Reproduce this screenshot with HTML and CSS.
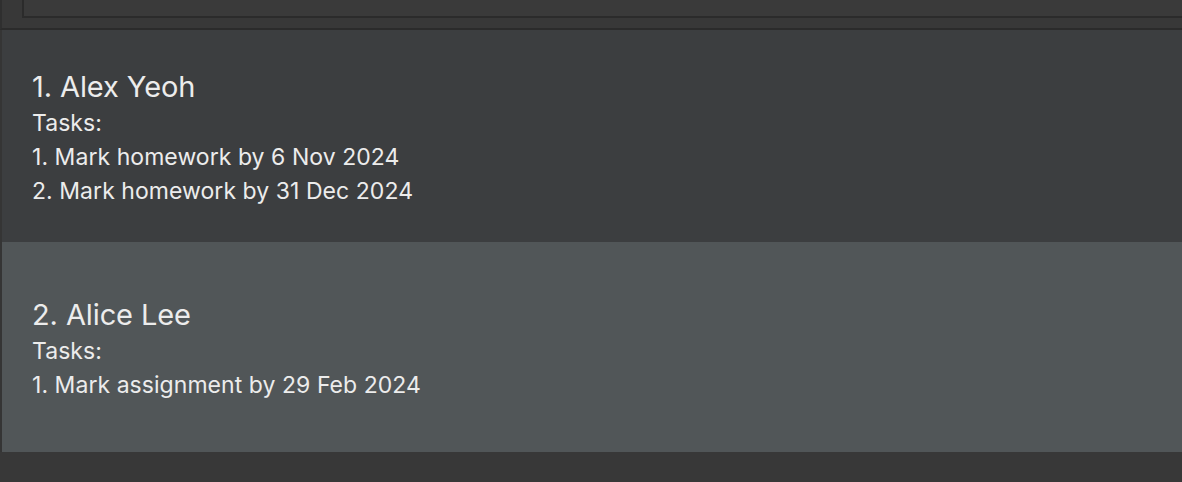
FILE: index.html
```html
<!DOCTYPE html>
<html>
<head>
<meta charset="utf-8">
<link rel="stylesheet" href="styles.css">
</head>
<body>
<div class="app">
  <div class="top-panel">
    <div class="inner-box"></div>
  </div>
  <div class="list">
    <div class="cell cell-odd">
      <div class="name">1. Alex Yeoh</div>
      <div class="line">Tasks:</div>
      <div class="line">1. Mark homework by 6 Nov 2024</div>
      <div class="line">2. Mark homework by 31 Dec 2024</div>
    </div>
    <div class="cell cell-even">
      <div class="name">2. Alice Lee</div>
      <div class="line">Tasks:</div>
      <div class="line">1. Mark assignment by 29 Feb 2024</div>
    </div>
  </div>
</div>
</body>
</html>
```
FILE: styles.css
```css
html, body {
  margin: 0;
  padding: 0;
}
body {
  background: #383838;
  width: 1182px;
  height: 482px;
  overflow: hidden;
  font-family: Inter, "Noto Sans", sans-serif;
  color: #ececec;
}
.app {
  display: flex;
  flex-direction: column;
}
.top-panel {
  height: 28px;
  background: #383838;
  border-bottom: 2px solid #2b2b2b;
  border-left: 2px solid #2f2f2f;
  padding-left: 20px;
}
.inner-box {
  height: 16px;
  border-left: 2px solid #2b2b2b;
  border-bottom: 2px solid #2b2b2b;
  background: #3a3a3a;
  margin-right: -4px;
}
.list {
  display: flex;
  flex-direction: column;
  border-left: 2px solid #353535;
}
.cell {
  display: flex;
  flex-direction: column;
  justify-content: center;
  padding-left: 30px;
  padding-top: 4px;
  box-sizing: border-box;
}
.cell-odd {
  height: 212px;
  background: #3c3e40;
}
.cell-even {
  height: 210px;
  background: #515658;
}
.name {
  font-size: 29px;
  line-height: 38px;
  letter-spacing: -0.1px;
}
.line {
  font-size: 23px;
  line-height: 34px;
  letter-spacing: 0.05px;
}
```
